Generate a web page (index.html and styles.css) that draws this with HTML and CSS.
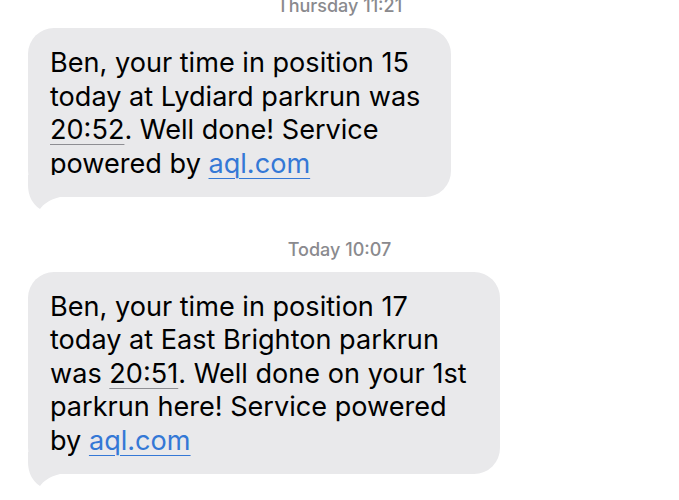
FILE: index.html
```html
<!DOCTYPE html>
<html lang="en">
<head>
<meta charset="utf-8">
<title>Messages</title>
<link rel="stylesheet" href="styles.css">
</head>
<body>
<main class="thread">
  <div class="stamp stamp-first">Thursday 11:21</div>
  <div class="bubble bubble-narrow">
    <p class="text">Ben, your time in position 15<br>today at Lydiard parkrun was<br><span class="detect">20:52</span>. Well done! Service<br>powered by <a class="link" href="#">aql.com</a></p>
    <svg class="tail" width="40" height="36" viewBox="0 -22 40 36" aria-hidden="true"><path d="M0,-22 L0,-12 C0,-2 4,7 12,12 C15,8 20,3 32,0 L40,0 L40,-22 Z" fill="#e9e9eb"/></svg>
  </div>
  <div class="stamp stamp-second">Today 10:07</div>
  <div class="bubble bubble-wide">
    <p class="text">Ben, your time in position 17<br>today at East Brighton parkrun<br>was <span class="detect">20:51</span>. Well done on your 1st<br>parkrun here! Service powered<br>by <a class="link" href="#">aql.com</a></p>
    <svg class="tail" width="40" height="36" viewBox="0 -22 40 36" aria-hidden="true"><path d="M0,-22 L0,-12 C0,-2 4,7 12,12 C15,8 20,3 32,0 L40,0 L40,-22 Z" fill="#e9e9eb"/></svg>
  </div>
</main>
</body>
</html>
```
FILE: styles.css
```css
html, body {
  margin: 0;
  padding: 0;
  background: #ffffff;
}
body {
  width: 679px;
  height: 500px;
  overflow: hidden;
  font-family: Inter, "Noto Sans", "Liberation Sans", sans-serif;
}
.thread {
  display: flex;
  flex-direction: column;
  align-items: flex-start;
}
.stamp {
  align-self: stretch;
  text-align: center;
  font-size: 18px;
  line-height: 20px;
  font-weight: 500;
  color: #8a8a8e;
}
.stamp-first {
  margin-top: -4px;
}
.stamp-second {
  margin-top: 42.5px;
}
.bubble {
  position: relative;
  margin-top: 12px;
  margin-left: 28px;
  background: #e9e9eb;
  border-radius: 26px;
  padding: 18px 10px 17px 22px;
  box-sizing: border-box;
}
.bubble-narrow {
  width: 423px;
}
.bubble-wide {
  width: 472px;
}
.text {
  margin: 0;
  font-size: 27.1px;
  line-height: 33.5px;
  color: #000000;
  white-space: nowrap;
}
.detect {
  text-decoration: underline;
  text-decoration-color: #8e8e93;
  text-decoration-thickness: 1px;
  text-underline-offset: 5px;
}
.link {
  color: #3478d6;
  text-decoration: underline;
  text-decoration-thickness: 1px;
  text-underline-offset: 5px;
}
.tail {
  position: absolute;
  left: 0;
  bottom: -14px;
  display: block;
}
```
